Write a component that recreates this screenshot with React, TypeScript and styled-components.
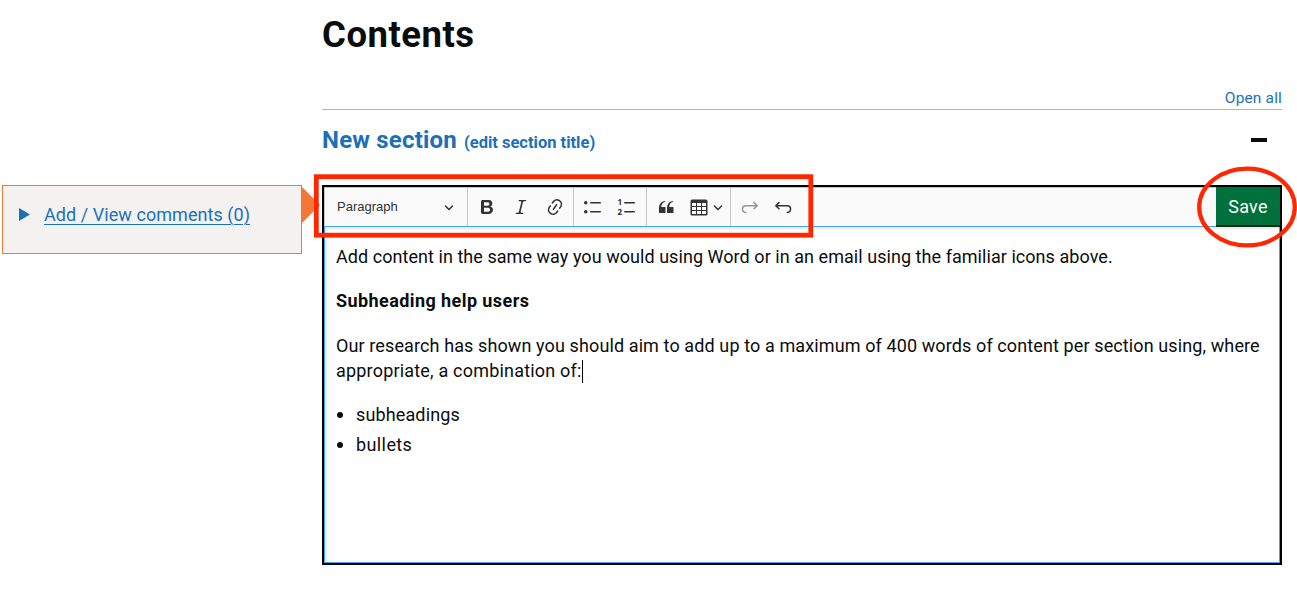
import React from 'react';
import styled, { createGlobalStyle } from 'styled-components';

const Global = createGlobalStyle`
  *, *::before, *::after { box-sizing: border-box; }
  body { margin: 0; background: #fff; color: #0b0c0c; font-family: Roboto, "Liberation Sans", sans-serif; }
  h1, h2, h3, p, ul { margin: 0; padding: 0; }
`;

const Page = styled.div`
  position: relative;
  width: 1297px;
  height: 607px;
  overflow: hidden;
  display: grid;
  grid-template-columns: 300px 960px;
  column-gap: 20px;
  padding-left: 2px;
`;

const Aside = styled.aside`
  padding-top: 185px;
`;

const CommentBox = styled.div`
  position: relative;
  display: flex;
  align-items: flex-start;
  height: 69px;
  padding: 16px 0 0 16px;
  background: #f3f2f1;
  border: 1px solid #f47738;
`;

const Pointer = styled.svg`
  position: absolute;
  left: 299px;
  top: 1px;
`;

const Disclosure = styled.svg`
  margin: 6px 14px 0 0;
`;

const CommentLink = styled.a`
  color: #1d70b8;
  font-size: 18px;
  line-height: 26px;
  letter-spacing: 0.06px;
  text-decoration: underline;
  text-decoration-thickness: 1px;
  text-underline-offset: 3px;
`;

const Main = styled.main`
  display: flex;
  flex-direction: column;
`;

const Title = styled.h1`
  height: 88px;
  padding-top: 15px;
  font-size: 36.5px;
  line-height: 40px;
  letter-spacing: 0.5px;
`;

const Controls = styled.div`
  display: flex;
  justify-content: flex-end;
  height: 22px;
  border-bottom: 1px solid #b1b4b6;
  color: #1d70b8;
  font-size: 15.5px;
  line-height: 20px;
  letter-spacing: 0.15px;
`;

const SectionHeader = styled.div`
  display: flex;
  justify-content: space-between;
  height: 75px;
  padding: 14px 15px 0 0;
  color: #1d70b8;
`;

const SectionTitle = styled.h2`
  font-size: 24px;
  line-height: 32px;
  letter-spacing: 0.2px;
`;

const EditTitle = styled.span`
  margin-left: 7px;
  font-size: 16.5px;
  letter-spacing: 0;
`;

const Collapse = styled.span`
  width: 16px;
  height: 4px;
  margin-top: 14px;
  background: #0b0c0c;
`;

const Editor = styled.section`
  display: flex;
  flex-direction: column;
  height: 380px;
  border: 2px solid #000;
`;

const Toolbar = styled.div`
  display: flex;
  height: 39px;
  background: #fafafa;
  border-top: 1px solid #c4c4c4;
  border-left: 1px solid #c4c4c4;
`;

const HeadingSelect = styled.div`
  display: flex;
  align-items: center;
  justify-content: space-between;
  width: 142px;
  padding: 0 13px 0 12px;
  color: #333;
  font: 13px/20px "Liberation Sans", Arial, sans-serif;
`;

const Group = styled.div<{ $width: number; $gap?: number }>`
  display: flex;
  align-items: center;
  gap: ${(p) => p.$gap ?? 14}px;
  width: ${(p) => p.$width}px;
  padding-left: 9px;
  border-left: 1px solid #c4c4c4;
  color: #333;
`;

const TableButton = styled.span`
  display: flex;
  align-items: center;
  gap: 4px;
`;

const Glyph = styled.svg<{ $dim?: boolean }>`
  flex: none;
  display: block;
  fill: currentColor;
  opacity: ${(p) => (p.$dim ? 0.5 : 1)};
`;

const Digit = styled.text`
  font: 700 8px "Noto Sans", sans-serif;
`;

const SaveButton = styled.button`
  position: relative;
  width: 64px;
  height: 40px;
  margin: -1px 0 0 auto;
  padding: 2px 0 0;
  border: 0;
  border-bottom: 2px solid #002d18;
  background: #00703c;
  color: #fff;
  font: 18px/36px Roboto, sans-serif;
  letter-spacing: 0.3px;
`;

const Editable = styled.div`
  flex: 1;
  padding: 17px 11px 0;
  border: 1px solid #47a4f5;
  box-shadow: inset 2px 2px 3px rgba(0, 0, 0, 0.1);
  font-size: 18px;
  line-height: 25px;
`;

const Paragraph = styled.p`
  margin-bottom: 19px;
  letter-spacing: 0.05px;
`;

const Line = styled.span<{ $space: number }>`
  display: block;
  height: 25px;
  letter-spacing: ${(p) => p.$space}px;
`;

const Subheading = styled.h3`
  margin-bottom: 20px;
  font-size: 18px;
  line-height: 25px;
  letter-spacing: 0.42px;
`;

const Caret = styled.span`
  display: inline-block;
  width: 1px;
  height: 23px;
  margin: -2px 0 -2px 1px;
  vertical-align: -4px;
  background: #000;
`;

const List = styled.ul`
  list-style: none;
`;

const Item = styled.li<{ $space: number }>`
  display: flex;
  align-items: center;
  margin-bottom: 5px;
  letter-spacing: ${(p) => p.$space}px;

  &::before {
    content: '';
    width: 6px;
    height: 6px;
    margin: 1px 13px 0 1px;
    border-radius: 50%;
    background: #0b0c0c;
  }
`;

const Annotations = styled.svg`
  position: absolute;
  left: 0;
  top: 0;
  pointer-events: none;
`;

const paths = {
  bold: 'M10.187 17H5.773c-.637 0-1.092-.138-1.364-.415-.273-.277-.409-.718-.409-1.323V4.738c0-.617.14-1.062.419-1.332.279-.27.73-.406 1.354-.406h4.68c.69 0 1.288.041 1.793.124.506.083.96.242 1.36.477.341.197.644.447.906.75a3.262 3.262 0 0 1 .808 2.162c0 1.401-.722 2.426-2.167 3.075C15.05 10.175 16 11.315 16 13.01a3.756 3.756 0 0 1-2.296 3.504 6.1 6.1 0 0 1-1.517.377c-.571.073-1.238.11-2 .11zm-.217-6.217H7v4.087h3.069c1.977 0 2.965-.69 2.965-2.072 0-.707-.256-1.22-.768-1.537-.512-.319-1.277-.478-2.296-.478zM7 5.13v3.619h2.606c.729 0 1.292-.067 1.69-.2a1.6 1.6 0 0 0 .91-.765c.165-.267.247-.566.247-.897 0-.707-.26-1.176-.778-1.409-.519-.232-1.31-.348-2.375-.348H7z',
  italic: 'm9.586 14.633.021.004c-.036.335.095.655.393.962.082.083.173.15.274.201h1.474a.6.6 0 1 1 0 1.2H5.304a.6.6 0 0 1 0-1.2h1.15c.474-.07.809-.182 1.005-.334.157-.122.291-.32.404-.597l2.416-9.55a1.053 1.053 0 0 0-.281-.823 1.12 1.12 0 0 0-.442-.296H8.15a.6.6 0 0 1 0-1.2h6.443a.6.6 0 1 1 0 1.2h-1.195c-.376.056-.65.155-.823.296-.215.175-.423.439-.623.79l-2.366 9.347z',
  link: 'm11.077 15 .991-1.416a.75.75 0 1 1 1.229.86l-1.148 1.64a.748.748 0 0 1-.217.206 5.251 5.251 0 0 1-8.503-5.955.741.741 0 0 1 .12-.274l1.147-1.639a.75.75 0 1 1 1.228.86L4.933 10.7l.006.003a3.75 3.75 0 0 0 6.132 4.294l.006.004zm5.494-5.335a.748.748 0 0 1-.12.274l-1.147 1.639a.75.75 0 1 1-1.228-.86l.86-1.23a3.75 3.75 0 0 0-6.144-4.301l-.86 1.229a.75.75 0 0 1-1.229-.86l1.148-1.64a.748.748 0 0 1 .217-.206 5.251 5.251 0 0 1 8.503 5.955zm-4.563-2.532a.75.75 0 0 1 .184 1.045l-3.155 4.505a.75.75 0 1 1-1.229-.86l3.155-4.506a.75.75 0 0 1 1.045-.184z',
  bullets: 'M7 5.75c0 .414.336.75.75.75h9.5a.75.75 0 1 0 0-1.5h-9.5a.75.75 0 0 0-.75.75zm-6 0C1 4.784 1.777 4 2.75 4c.966 0 1.75.777 1.75 1.75 0 .966-.777 1.75-1.75 1.75C1.784 7.5 1 6.723 1 5.75zm6 9c0 .414.336.75.75.75h9.5a.75.75 0 1 0 0-1.5h-9.5a.75.75 0 0 0-.75.75zm-6 0c0-.966.777-1.75 1.75-1.75.966 0 1.75.777 1.75 1.75 0 .966-.777 1.75-1.75 1.75-.966 0-1.75-.777-1.75-1.75z',
  rules: 'M7 5.75c0 .414.336.75.75.75h9.5a.75.75 0 1 0 0-1.5h-9.5a.75.75 0 0 0-.75.75zm0 9c0 .414.336.75.75.75h9.5a.75.75 0 1 0 0-1.5h-9.5a.75.75 0 0 0-.75.75z',
  quote: 'M3 10.423a6.5 6.5 0 0 1 6.056-6.408l.038.67C6.448 5.423 5.354 7.663 5.22 10H9c.552 0 .5.432.5.986v4.511c0 .554-.448.503-1 .503h-5c-.552 0-.5-.449-.5-1.003v-4.574zm8 0a6.5 6.5 0 0 1 6.056-6.408l.038.67c-2.646.739-3.74 2.979-3.873 5.315H17c.552 0 .5.432.5.986v4.511c0 .554-.448.503-1 .503h-5c-.552 0-.5-.449-.5-1.003v-4.574z',
  table: 'M3 6v3h4V6H3zm0 4v3h4v-3H3zm0 4v3h4v-3H3zm5 3h4v-3H8v3zm5 0h4v-3h-4v3zm4-4v-3h-4v3h4zm0-4V6h-4v3h4zm1.5 8a1.5 1.5 0 0 1-1.5 1.5H3A1.5 1.5 0 0 1 1.5 17V4c.222-.863 1.068-1.5 2-1.5h13c.932 0 1.778.637 2 1.5v13zM12 13v-3H8v3h4zm0-4V6H8v3h4z',
};

const Icon = ({ d }: { d: string }) => (
  <Glyph width="20" height="20" viewBox="0 0 20 20"><path d={d} fillRule="evenodd" /></Glyph>
);

const Chevron = () => (
  <Glyph width="10" height="10" viewBox="0 0 10 10">
    <path d="M.941 4.523a.75.75 0 1 1 1.06-1.06l3.006 3.005 3.005-3.005a.75.75 0 1 1 1.06 1.06l-3.549 3.55a.75.75 0 0 1-1.168-.136L.941 4.523z" />
  </Glyph>
);

const HistoryArrow = ({ redo }: { redo?: boolean }) => (
  <Glyph width="20" height="20" viewBox="0 0 20 20" $dim={redo}>
    <path
      d="M6 5.6 2.8 8.7 6 11.7M3 8.7h11.2a3.3 3.3 0 0 1 0 6.7"
      transform={redo ? 'matrix(-1 0 0 1 20 0)' : undefined}
      fill="none"
      stroke="currentColor"
      strokeWidth="1.5"
      strokeLinecap="round"
      strokeLinejoin="round"
    />
  </Glyph>
);

export default function App() {
  return (
    <>
      <Global />
      <Page>
        <Aside>
          <CommentBox>
            <Disclosure width="11" height="13" viewBox="0 0 11 13"><path d="M0 0 11 6.5 0 13z" fill="#1d70b8" /></Disclosure>
            <CommentLink>Add / View comments (0)</CommentLink>
            <Pointer width="18" height="36" viewBox="0 0 18 36"><path d="M0 0 18 18 0 36z" fill="#f47738" /></Pointer>
          </CommentBox>
        </Aside>
        <Main>
          <Title>Contents</Title>
          <Controls>Open all</Controls>
          <SectionHeader>
            <SectionTitle>New section<EditTitle>(edit section title)</EditTitle></SectionTitle>
            <Collapse />
          </SectionHeader>
          <Editor>
            <Toolbar>
              <HeadingSelect>Paragraph<Chevron /></HeadingSelect>
              <Group $width={106}>
                <Icon d={paths.bold} />
                <Icon d={paths.italic} />
                <Icon d={paths.link} />
              </Group>
              <Group $width={73}>
                <Icon d={paths.bullets} />
                <Glyph width="20" height="20" viewBox="0 0 20 20">
                  <Digit x="0.4" y="8">1</Digit>
                  <Digit x="0.4" y="17.6">2</Digit>
                  <path d={paths.rules} />
                </Glyph>
              </Group>
              <Group $width={84} $gap={13}>
                <Icon d={paths.quote} />
                <TableButton>
                  <Icon d={paths.table} />
                  <Chevron />
                </TableButton>
              </Group>
              <Group $width={83} $gap={13}>
                <HistoryArrow redo />
                <HistoryArrow />
              </Group>
              <SaveButton>Save</SaveButton>
            </Toolbar>
            <Editable>
              <Paragraph>Add content in the same way you would using Word or in an email using the familiar icons above.</Paragraph>
              <Subheading>Subheading help users</Subheading>
              <Paragraph>
                <Line $space={0.11}>Our research has shown you should aim to add up to a maximum of 400 words of content per section using, where</Line>
                <Line $space={0.19}>appropriate, a combination of:<Caret /></Line>
              </Paragraph>
              <List>
                <Item $space={0.13}>subheadings</Item>
                <Item $space={0.4}>bullets</Item>
              </List>
            </Editable>
          </Editor>
        </Main>
        <Annotations width="1297" height="607" viewBox="0 0 1297 607" fill="none" stroke="#ff2600">
          <rect x="316.3" y="176.7" width="494.5" height="58.5" strokeWidth="4.8" />
          <ellipse cx="1247" cy="207" rx="47.8" ry="38.4" strokeWidth="4.2" />
        </Annotations>
      </Page>
    </>
  );
}
